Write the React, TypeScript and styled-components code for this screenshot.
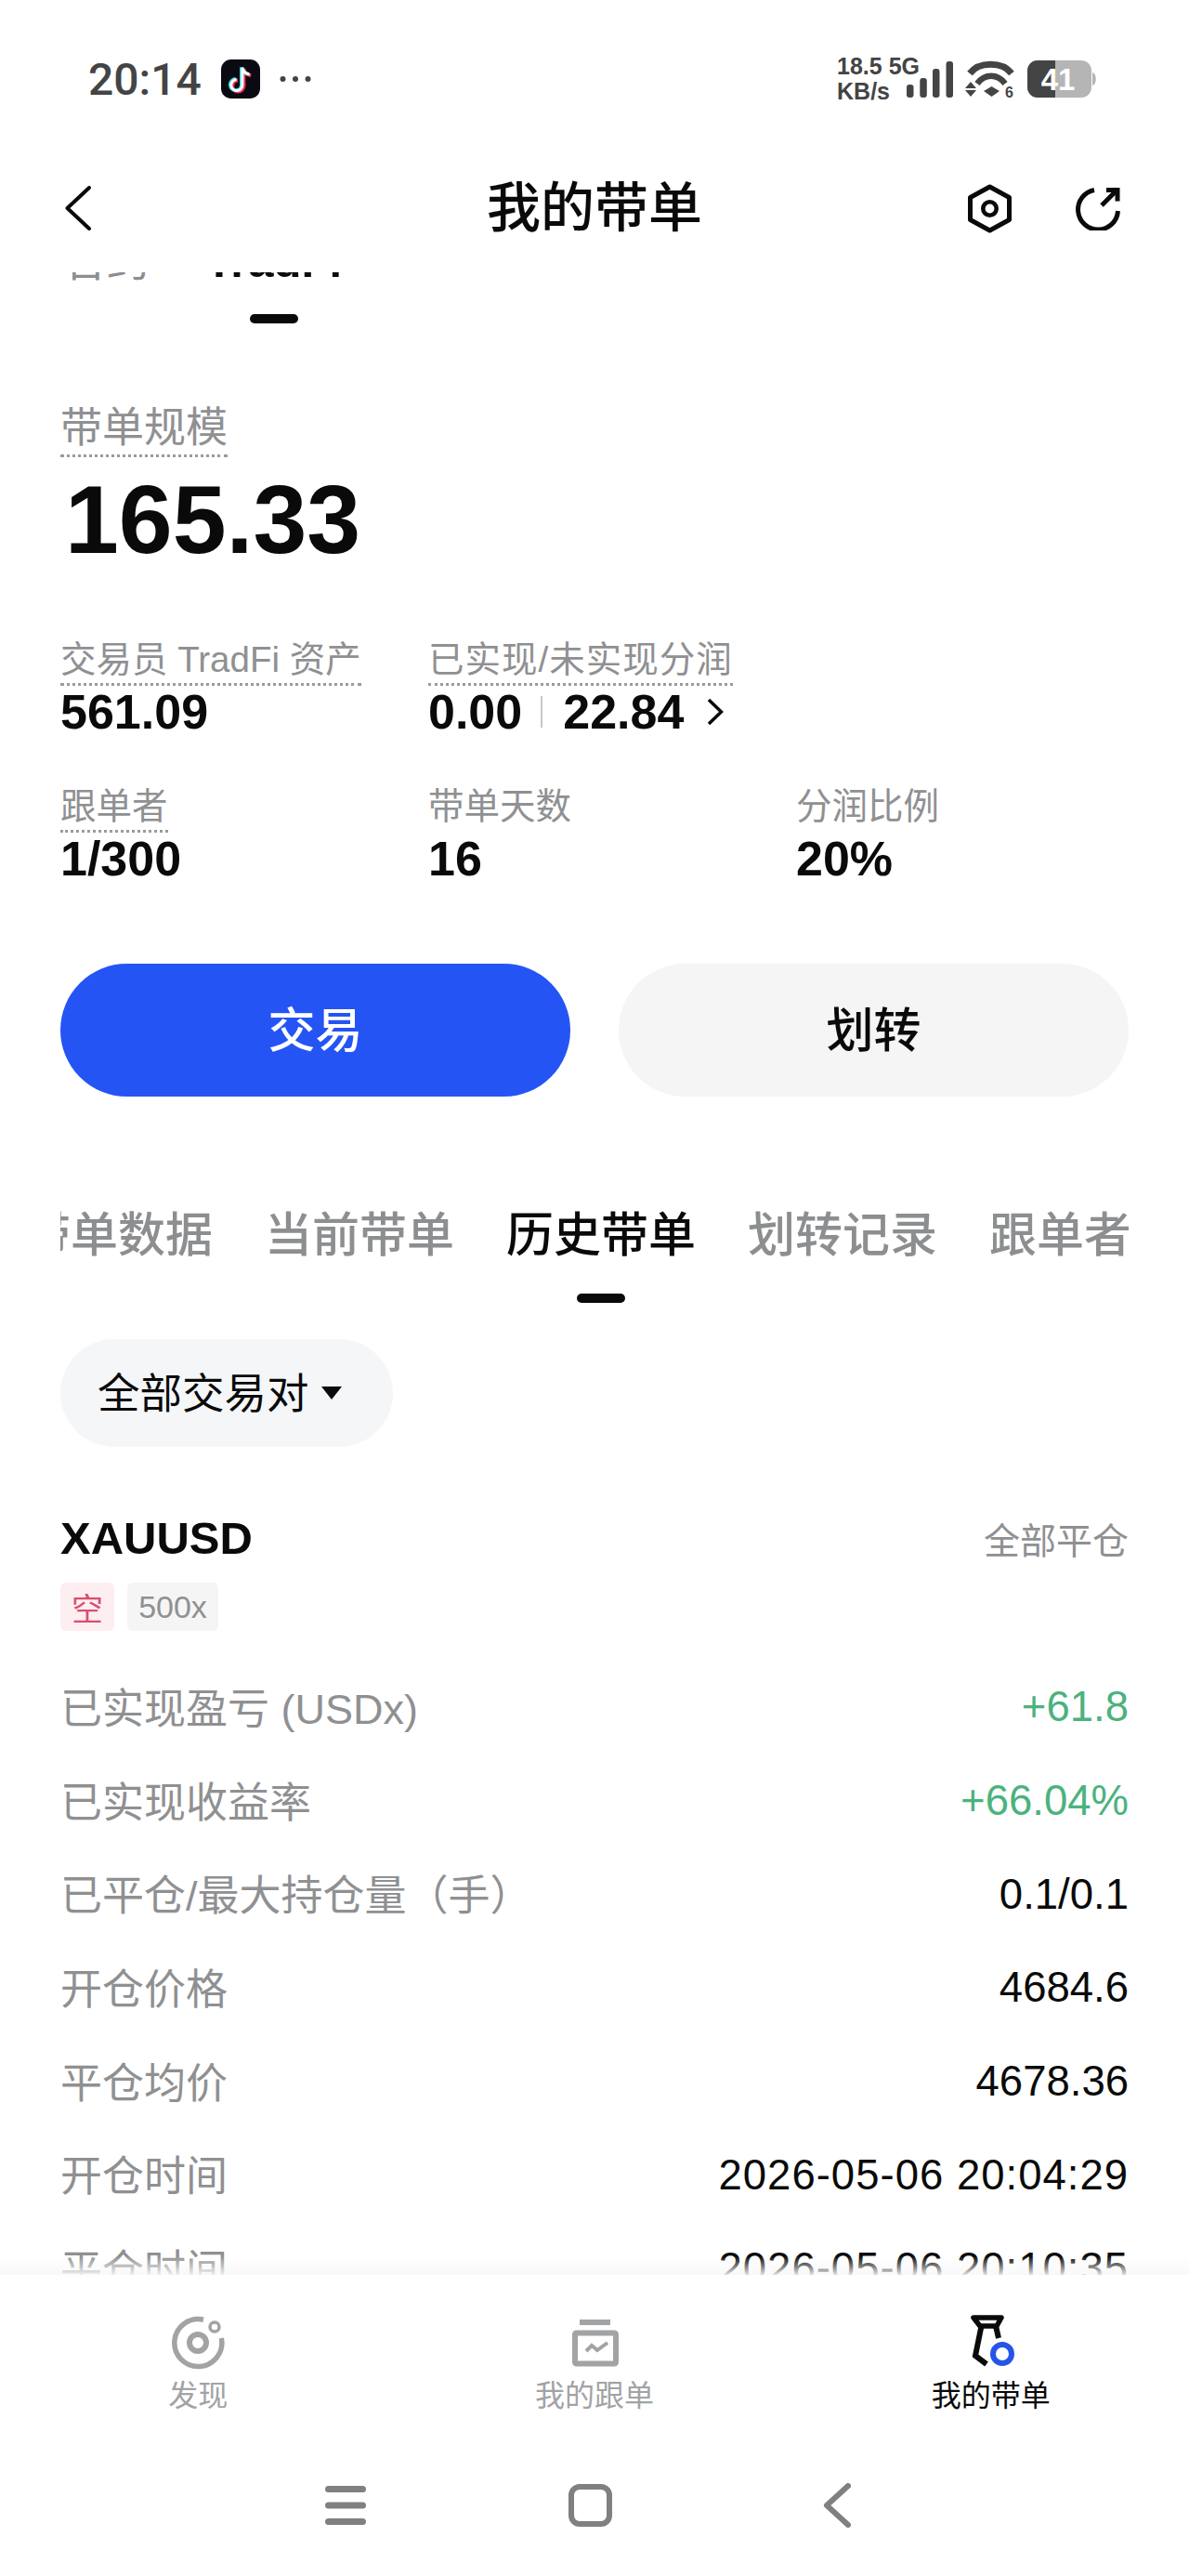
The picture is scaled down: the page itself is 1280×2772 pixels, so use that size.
import React from "react";
import styled, { createGlobalStyle } from "styled-components";

const SANS = `"Liberation Sans", "Noto Sans CJK SC", sans-serif`;

const GlobalStyle = createGlobalStyle`
  html, body {
    margin: 0;
    padding: 0;
    background: #ffffff;
  }
  * {
    box-sizing: border-box;
  }
`;

const Page = styled.div`
  display: flex;
  flex-direction: column;
  width: 1280px;
  height: 2772px;
  overflow: hidden;
  background: #ffffff;
  font-family: ${SANS};
  color: #0a0a0a;
`;

const StatusBar = styled.div`
  display: flex;
  align-items: center;
  justify-content: space-between;
  height: 170px;
  padding: 0 99px 0 95px;
  color: #444444;
`;

const StatusLeft = styled.div`
  display: flex;
  align-items: center;
  gap: 21px;
`;

const StatusTime = styled.span`
  font-family: Roboto, sans-serif;
  font-size: 48px;
  font-weight: 500;
`;

const StatusRight = styled.div`
  display: flex;
  align-items: center;
  gap: 13px;
`;

const NetSpeed = styled.div`
  display: flex;
  flex-direction: column;
  font-size: 25px;
  font-weight: 700;
  line-height: 27px;
  margin-right: -27px;
  white-space: nowrap;
`;

const Header = styled.div`
  display: grid;
  grid-template-columns: 1fr auto 1fr;
  align-items: center;
  height: 123px;
  padding: 0 74px 15px;
`;

const BackArrow = styled.svg`
  margin-left: -4px;
`;

const Title = styled.h1`
  margin: 0;
  font-size: 58px;
  font-weight: 500;
  line-height: 104px;
  color: #0a0a0a;
`;

const HeaderActions = styled.div`
  display: flex;
  align-items: center;
  justify-content: flex-end;
  gap: 69px;
`;

const Scroller = styled.div`
  flex: 1;
  min-height: 0;
  overflow: hidden;
`;

const TopTabs = styled.div`
  display: flex;
  align-items: flex-start;
  gap: 60px;
  height: 72px;
  padding-left: 69px;
  margin-top: -42px;
`;

const TopTab = styled.div<{ $active?: boolean }>`
  display: flex;
  flex-direction: column;
  align-items: center;
  font-size: ${(p) => (p.$active ? 49 : 46)}px;
  line-height: 60px;
  font-weight: ${(p) => (p.$active ? 700 : 400)};
  color: ${(p) => (p.$active ? "#0a0a0a" : "#8c8e90")};
`;

const Indicator = styled.div`
  width: 52px;
  height: 10px;
  border-radius: 5px;
  background: #0a0a0a;
`;

const TopIndicator = styled(Indicator)`
  margin-top: 27px;
`;

const Summary = styled.div`
  padding: 0 65px;
  margin-top: 111px;
`;

const HintLabel = styled.span<{ $plain?: boolean; $size?: number; $tracking?: number }>`
  display: inline-block;
  font-size: ${(p) => p.$size ?? 38.5}px;
  line-height: ${(p) => Math.round(p.$size ?? 38.5) + 9}px;
  letter-spacing: ${(p) => p.$tracking ?? 0}px;
  color: #8f9092;
  white-space: nowrap;
  padding-bottom: 1px;
  border-bottom: 3px dotted ${(p) => (p.$plain ? "transparent" : "#9a9b9d")};
`;

const BigValue = styled.div`
  font-size: 104px;
  font-weight: 700;
  line-height: 108px;
  margin: 13px 0 0 5px;
  color: #0a0a0a;
`;

const StatGrid = styled.div`
  display: grid;
  grid-template-columns: 396px 396px 1fr;
  row-gap: 50px;
  margin-top: 73px;
`;

const Stat = styled.div`
  display: flex;
  flex-direction: column;
  align-items: flex-start;
`;

const StatValue = styled.div`
  display: flex;
  align-items: center;
  font-size: 52px;
  font-weight: 700;
  line-height: 56px;
  color: #0a0a0a;
`;

const ValueDivider = styled.span`
  width: 2px;
  height: 34px;
  margin: 0 22px 0 20px;
  background: #c8c8c8;
`;

const ValueArrow = styled.svg`
  margin-left: 25px;
`;

const Buttons = styled.div`
  display: grid;
  grid-template-columns: 549px 549px;
  gap: 52px;
  margin-top: 85px;
`;

const ActionButton = styled.div<{ $primary?: boolean }>`
  display: flex;
  align-items: center;
  justify-content: center;
  height: 143px;
  padding-bottom: 8px;
  border-radius: 72px;
  font-size: 51px;
  font-weight: 500;
  background: ${(p) => (p.$primary ? "#2554f5" : "#f5f5f5")};
  color: ${(p) => (p.$primary ? "#ffffff" : "#0a0a0a")};
`;

const TabsClip = styled.div`
  margin: 115px 65px 0;
  overflow: hidden;
`;

const TabStrip = styled.div`
  display: flex;
  gap: 56px;
  margin-left: -40px;
`;

const Tab = styled.div<{ $active?: boolean }>`
  display: flex;
  flex-direction: column;
  align-items: center;
  flex: none;
  font-size: 51px;
  font-weight: 500;
  line-height: 70px;
  white-space: nowrap;
  color: ${(p) => (p.$active ? "#0a0a0a" : "#8c8e90")};
`;

const TabIndicator = styled(Indicator)<{ $hidden?: boolean }>`
  margin-top: 27px;
  visibility: ${(p) => (p.$hidden ? "hidden" : "visible")};
`;

const FilterPill = styled.div`
  display: inline-flex;
  align-items: center;
  height: 116px;
  width: 358px;
  margin: 39px 0 0 65px;
  padding: 0 0 6px 40px;
  border-radius: 58px;
  background: #f4f6f8;
  font-size: 45.5px;
  color: #0a0a0a;
`;

const Caret = styled.span`
  width: 0;
  height: 0;
  margin: 6px 0 0 13px;
  border-left: 11px solid transparent;
  border-right: 11px solid transparent;
  border-top: 14px solid #0a0a0a;
`;

const Position = styled.div`
  padding: 0 65px;
  margin-top: 70px;
`;

const PositionHead = styled.div`
  display: flex;
  align-items: center;
  justify-content: space-between;
  height: 56px;
`;

const Symbol = styled.div`
  font-size: 49px;
  font-weight: 700;
`;

const CloseType = styled.div`
  font-size: 39px;
  color: #8f9092;
`;

const Tags = styled.div`
  display: flex;
  gap: 14px;
  margin-top: 20px;
`;

const Tag = styled.div<{ $side?: boolean }>`
  display: flex;
  align-items: center;
  justify-content: center;
  height: 52px;
  width: ${(p) => (p.$side ? 58 : 98)}px;
  border-radius: 6px;
  font-size: 34px;
  background: ${(p) => (p.$side ? "#fdeef1" : "#f5f5f5")};
  color: ${(p) => (p.$side ? "#d94f70" : "#8f9092")};
`;

const Rows = styled.div`
  margin-top: 32px;
`;

const Row = styled.div`
  display: flex;
  align-items: center;
  justify-content: space-between;
  height: 100.7px;
`;

const RowLabel = styled.div`
  padding-bottom: 4px;
  font-size: 45px;
  color: #8f9092;
  white-space: nowrap;
`;

const RowValue = styled.div<{ $gain?: boolean; $date?: boolean }>`
  font-size: 45.5px;
  letter-spacing: ${(p) => (p.$date ? 1 : 0)}px;
  color: ${(p) => (p.$gain ? "#4cb27e" : "#0a0a0a")};
  white-space: nowrap;
`;

const BottomNav = styled.div`
  position: relative;
  display: grid;
  grid-template-columns: repeat(3, 1fr);
  height: 172px;
  background: #ffffff;

  &::before {
    content: "";
    position: absolute;
    left: 0;
    right: 0;
    top: -20px;
    height: 20px;
    background: linear-gradient(rgba(248, 248, 248, 0), rgba(248, 248, 248, 0.9));
  }
`;

const NavItem = styled.div<{ $active?: boolean }>`
  display: flex;
  flex-direction: column;
  align-items: center;
  padding-top: 43px;
  font-size: 32px;
  line-height: 44px;
  color: ${(p) => (p.$active ? "#0a0a0a" : "#a2a3a5")};
`;

const NavIcon = styled.svg`
  display: block;
  width: 60px;
  height: 60px;
  margin-bottom: 5px;
`;

const SystemNav = styled.div`
  display: flex;
  align-items: center;
  justify-content: center;
  gap: 218px;
  height: 152px;
  padding-right: 14px;
`;

const Chevron = () => (
  <BackArrow width="28" height="48" viewBox="0 0 28 48" fill="none">
    <path d="M26 2 L2.5 24 L26 46" stroke="#0a0a0a" strokeWidth="4" strokeLinecap="round" strokeLinejoin="round" />
  </BackArrow>
);

const HexIcon = () => (
  <svg width="47" height="53" viewBox="0 0 47 53" fill="none">
    <path d="M23.5 3 L44.5 14.5 V38.5 L23.5 50 L2.5 38.5 V14.5 Z" stroke="#0a0a0a" strokeWidth="5" strokeLinejoin="round" />
    <circle cx="23.5" cy="26.5" r="7.2" stroke="#0a0a0a" strokeWidth="4.6" />
  </svg>
);

const ShareIcon = () => (
  <svg width="48" height="47" viewBox="0 0 48 47" fill="none">
    <path d="M20 3.5 A21.5 21.5 0 1 0 45.5 26" stroke="#0a0a0a" strokeWidth="5" />
    <path d="M28 20 L44 4" stroke="#0a0a0a" strokeWidth="5" />
    <path d="M33 3.5 H45 V15.5" stroke="#0a0a0a" strokeWidth="5" />
  </svg>
);

const TikTokIcon = () => (
  <svg width="42" height="42" viewBox="0 0 43 43">
    <rect width="43" height="43" rx="11" fill="#0a0a12" />
    <path d="M23.5 9 V28 A6.2 6.2 0 1 1 17 22 M23.5 9 C24.5 14 27.5 16 31.5 16.5" fill="none" stroke="#ff2d55" strokeWidth="4" transform="translate(1.5 1)" />
    <path d="M23.5 9 V28 A6.2 6.2 0 1 1 17 22 M23.5 9 C24.5 14 27.5 16 31.5 16.5" fill="none" stroke="#35e0e8" strokeWidth="4" transform="translate(-1 -0.5)" />
    <path d="M23.5 9 V28 A6.2 6.2 0 1 1 17 22 M23.5 9 C24.5 14 27.5 16 31.5 16.5" fill="none" stroke="#ffffff" strokeWidth="3" />
  </svg>
);

const DotsIcon = () => (
  <svg width="34" height="8" viewBox="0 0 34 8">
    <circle cx="3.5" cy="4" r="3" fill="#444" />
    <circle cx="17" cy="4" r="3" fill="#444" />
    <circle cx="30.5" cy="4" r="3" fill="#444" />
  </svg>
);

const SignalIcon = () => (
  <svg width="50" height="40" viewBox="0 0 50 40" fill="#444">
    <rect x="0" y="26" width="7.5" height="14" rx="3" />
    <rect x="14.3" y="19" width="7.5" height="21" rx="3" />
    <rect x="28" y="9" width="7.5" height="31" rx="3" />
    <rect x="42.5" y="1" width="7.5" height="39" rx="3" />
  </svg>
);

const WifiIcon = () => (
  <svg width="54" height="40" viewBox="0 0 54 40" fill="none">
    <path d="M5 14 C15 1 40 1 50 14" stroke="#444" strokeWidth="7" />
    <path d="M13 25 C21 14 35 14 43 25" stroke="#444" strokeWidth="6.5" />
    <path d="M20 33 L28.5 28 L37 33 L28.5 39 Z" fill="#444" />
    <path d="M0 30 L6 23 L12 30 Z M0 32 L12 32 L6 39 Z" fill="#444" />
    <text x="43" y="40" fontSize="16" fontWeight="700" fill="#444" fontFamily="Liberation Sans">6</text>
  </svg>
);

const BatteryIcon = () => (
  <svg width="75" height="40" viewBox="0 0 75 40">
    <rect x="0" y="0" width="69" height="40" rx="11" fill="#b5b5b5" />
    <path d="M11 0 H30 V40 H11 A11 11 0 0 1 0 29 V11 A11 11 0 0 1 11 0 Z" fill="#444" />
    <path d="M70 13 C75 14 75 26 70 27 Z" fill="#b5b5b5" />
    <text x="33" y="32" textAnchor="middle" fontSize="33" fontWeight="700" fill="#fff" fontFamily="Liberation Sans">41</text>
  </svg>
);

const DiscoverIcon = () => (
  <NavIcon viewBox="0 0 60 60" fill="none">
    <path d="M36 5.2 A25.5 25.5 0 1 0 55.3 25" stroke="#a2a3a5" strokeWidth="5.5" />
    <circle cx="30" cy="30" r="9" stroke="#a2a3a5" strokeWidth="6" />
    <circle cx="48" cy="13" r="5" stroke="#a2a3a5" strokeWidth="3.5" />
  </NavIcon>
);

const CopyIcon = () => (
  <NavIcon viewBox="0 0 60 60" fill="none">
    <rect x="14" y="5" width="33" height="6" fill="#a2a3a5" />
    <rect x="9" y="19.5" width="44" height="33" rx="1.5" stroke="#a2a3a5" strokeWidth="6" />
    <path d="M21 39 L27 33 L33 38 L44 30" stroke="#a2a3a5" strokeWidth="4" />
  </NavIcon>
);

const LeadIcon = () => (
  <NavIcon viewBox="0 0 60 60" fill="none">
    <path d="M11 3 H41 L36 12 H18 Z" stroke="#0a0a0a" strokeWidth="5.5" strokeLinejoin="round" />
    <path d="M19.5 12 L13 44 L25 53" stroke="#0a0a0a" strokeWidth="6" />
    <path d="M35 12 L38 25" stroke="#0a0a0a" strokeWidth="6" />
    <circle cx="42" cy="42" r="10" stroke="#2554e8" strokeWidth="6" />
  </NavIcon>
);

const MenuIcon = () => (
  <svg width="44" height="42" viewBox="0 0 44 42" fill="#808080">
    <rect y="0" width="44" height="7" rx="3.5" />
    <rect y="17.5" width="44" height="7" rx="3.5" />
    <rect y="35" width="44" height="7" rx="3.5" />
  </svg>
);

const HomeIcon = () => (
  <svg width="47" height="46" viewBox="0 0 47 46" fill="none">
    <rect x="3" y="3" width="41" height="40" rx="9" stroke="#808080" strokeWidth="6" />
  </svg>
);

const BackIcon = () => (
  <svg width="39" height="48" viewBox="0 0 39 48" fill="none">
    <path d="M36 3 L13 24 L36 45" stroke="#808080" strokeWidth="6" strokeLinecap="round" strokeLinejoin="round" />
  </svg>
);

const ROWS: { label: string; value: string; gain?: boolean; date?: boolean }[] = [
  { label: "已实现盈亏 (USDx)", value: "+61.8", gain: true },
  { label: "已实现收益率", value: "+66.04%", gain: true },
  { label: "已平仓/最大持仓量（手）", value: "0.1/0.1" },
  { label: "开仓价格", value: "4684.6" },
  { label: "平仓均价", value: "4678.36" },
  { label: "开仓时间", value: "2026-05-06 20:04:29", date: true },
  { label: "平仓时间", value: "2026-05-06 20:10:35", date: true },
];

const TABS = ["带单数据", "当前带单", "历史带单", "划转记录", "跟单者"];

export default function App() {
  return (
    <Page>
      <GlobalStyle />
      <StatusBar>
        <StatusLeft>
          <StatusTime>20:14</StatusTime>
          <TikTokIcon />
          <DotsIcon />
        </StatusLeft>
        <StatusRight>
          <NetSpeed>
            <span>18.5 5G</span>
            <span>KB/s</span>
          </NetSpeed>
          <SignalIcon />
          <WifiIcon />
          <BatteryIcon />
        </StatusRight>
      </StatusBar>

      <Header>
        <Chevron />
        <Title>我的带单</Title>
        <HeaderActions>
          <HexIcon />
          <ShareIcon />
        </HeaderActions>
      </Header>

      <Scroller>
        <TopTabs>
          <TopTab>合约</TopTab>
          <TopTab $active>
            TradFi
            <TopIndicator />
          </TopTab>
        </TopTabs>

        <Summary>
          <HintLabel $size={45}>带单规模</HintLabel>
          <BigValue>165.33</BigValue>
          <StatGrid>
            <Stat>
              <HintLabel>交易员 TradFi 资产</HintLabel>
              <StatValue>561.09</StatValue>
            </Stat>
            <Stat>
              <HintLabel $tracking={1}>已实现/未实现分润</HintLabel>
              <StatValue>
                0.00
                <ValueDivider />
                22.84
                <ValueArrow width="18" height="30" viewBox="0 0 18 30" fill="none">
                  <path d="M2 2 L15.5 15 L2 28" stroke="#0a0a0a" strokeWidth="3.5" />
                </ValueArrow>
              </StatValue>
            </Stat>
            <div />
            <Stat>
              <HintLabel>跟单者</HintLabel>
              <StatValue>1/300</StatValue>
            </Stat>
            <Stat>
              <HintLabel $plain>带单天数</HintLabel>
              <StatValue>16</StatValue>
            </Stat>
            <Stat>
              <HintLabel $plain>分润比例</HintLabel>
              <StatValue>20%</StatValue>
            </Stat>
          </StatGrid>
          <Buttons>
            <ActionButton $primary>交易</ActionButton>
            <ActionButton>划转</ActionButton>
          </Buttons>
        </Summary>

        <TabsClip>
          <TabStrip>
            {TABS.map((t, i) => (
              <Tab key={t} $active={i === 2}>
                {t}
                <TabIndicator $hidden={i !== 2} />
              </Tab>
            ))}
          </TabStrip>
        </TabsClip>

        <FilterPill>
          全部交易对
          <Caret />
        </FilterPill>

        <Position>
          <PositionHead>
            <Symbol>XAUUSD</Symbol>
            <CloseType>全部平仓</CloseType>
          </PositionHead>
          <Tags>
            <Tag $side>空</Tag>
            <Tag>500x</Tag>
          </Tags>
          <Rows>
            {ROWS.map((r) => (
              <Row key={r.label}>
                <RowLabel>{r.label}</RowLabel>
                <RowValue $gain={r.gain} $date={r.date}>
                  {r.value}
                </RowValue>
              </Row>
            ))}
          </Rows>
        </Position>
      </Scroller>

      <BottomNav>
        <NavItem>
          <DiscoverIcon />
          发现
        </NavItem>
        <NavItem>
          <CopyIcon />
          我的跟单
        </NavItem>
        <NavItem $active>
          <LeadIcon />
          我的带单
        </NavItem>
      </BottomNav>

      <SystemNav>
        <MenuIcon />
        <HomeIcon />
        <BackIcon />
      </SystemNav>
    </Page>
  );
}
